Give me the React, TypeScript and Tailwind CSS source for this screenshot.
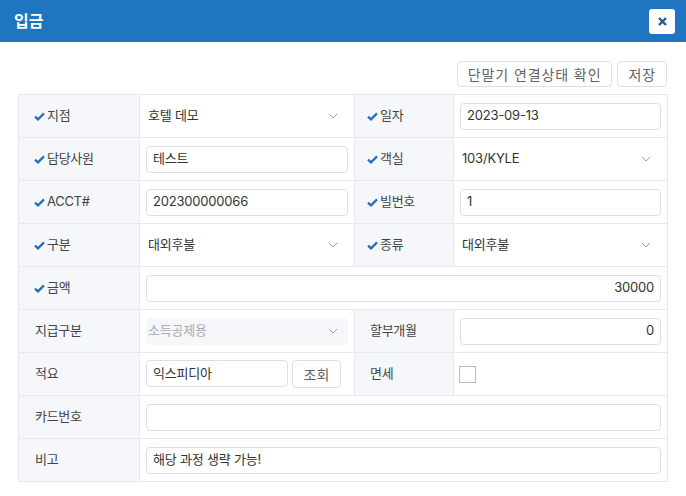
import React from "react";

const FONT = { fontFamily: 'Inter, "Noto Sans CJK KR", sans-serif' };

function Check() {
  return (
    <svg width="11" height="9" viewBox="0 0 11 9" className="mr-[2px] shrink-0">
      <path d="M1 4.6 L4 7.4 L10 1.4" fill="none" stroke="#2270b9" strokeWidth="2.2" />
    </svg>
  );
}

function Chevron() {
  return (
    <svg width="10" height="6" viewBox="0 0 10 6">
      <path d="M1 1 L5 5 L9 1" fill="none" stroke="#9aa0a8" strokeWidth="1" />
    </svg>
  );
}

function Label({ text, req, right }: { text: string; req?: boolean; right?: boolean }) {
  return (
    <div
      className={`flex items-center bg-[#f5f7fa] text-[13px] tracking-[-0.3px] text-[#444] ${
        right ? (req ? "pl-[12px]" : "pl-[15px]") : req ? "pl-[15px]" : "pl-4"
      }`}
    >
      {req && <Check />}
      {text}
    </div>
  );
}

function Input({ value, align }: { value: string; align?: "right" }) {
  return (
    <div
      className={`h-[27px] w-full rounded-[4px] border border-[#dcdfe6] bg-white px-[6px] flex items-center text-[13px] tracking-[-0.2px] text-[#333] ${
        align === "right" ? "justify-end" : ""
      }`}
    >
      {value}
    </div>
  );
}

function Select({ value, disabled }: { value: string; disabled?: boolean }) {
  return (
    <div
      className={`h-[27px] w-full rounded-[4px] flex items-center justify-between pl-[2px] pr-[10px] text-[13px] tracking-[-0.2px] ${
        disabled ? "bg-[#f5f7fa] text-[#a8abb2]" : "text-[#333]"
      }`}
    >
      <span>{value}</span>
      <Chevron />
    </div>
  );
}

function Value({ children, span }: { children: React.ReactNode; span?: boolean }) {
  return (
    <div className={`flex items-center bg-white px-[6px] ${span ? "col-span-3" : ""}`}>{children}</div>
  );
}

export default function App() {
  return (
    <div className="w-[686px] h-[496px] bg-white overflow-hidden" style={FONT}>
      <div className="h-[42px] bg-[#2075c0] flex items-center justify-between pl-[14px] pr-[11px]">
        <span className="text-white text-[16px] font-bold">입금</span>
        <div className="w-[26px] h-[25px] bg-white rounded-[3px] flex items-center justify-center">
          <svg width="11" height="11" viewBox="0 0 11 11">
            <path d="M2 2 L9 9 M9 2 L2 9" stroke="#1d5d9a" strokeWidth="2.4" />
          </svg>
        </div>
      </div>

      <div className="flex justify-end gap-[5px] pt-[19px] pr-[19px]">
        <button className="h-[26px] px-[10px] rounded-[4px] border border-[#dcdfe6] text-[14px] tracking-[0.9px] text-[#606266] bg-white">
          단말기 연결상태 확인
        </button>
        <button className="h-[26px] px-[10px] rounded-[4px] border border-[#dcdfe6] text-[14px] tracking-[0.9px] text-[#606266] bg-white">
          저장
        </button>
      </div>

      <div className="mx-[18px] mt-[7px] grid grid-cols-[120px_214px_98px_213px] auto-rows-[42px] gap-px bg-[#e6e8ec] border border-[#e6e8ec]">
        <Label text="지점" req />
        <Value>
          <Select value="호텔 데모" />
        </Value>
        <Label text="일자" req right />
        <Value>
          <Input value="2023-09-13" />
        </Value>

        <Label text="담당사원" req />
        <Value>
          <Input value="테스트" />
        </Value>
        <Label text="객실" req right />
        <Value>
          <Select value="103/KYLE" />
        </Value>

        <Label text="ACCT#" req />
        <Value>
          <Input value="202300000066" />
        </Value>
        <Label text="빌번호" req right />
        <Value>
          <Input value="1" />
        </Value>

        <Label text="구분" req />
        <Value>
          <Select value="대외후불" />
        </Value>
        <Label text="종류" req right />
        <Value>
          <Select value="대외후불" />
        </Value>

        <Label text="금액" req />
        <Value span>
          <Input value="30000" align="right" />
        </Value>

        <Label text="지급구분" />
        <Value>
          <Select value="소득공제용" disabled />
        </Value>
        <Label text="할부개월" right />
        <Value>
          <Input value="0" align="right" />
        </Value>

        <Label text="적요" />
        <Value>
          <div className="flex gap-[4px] w-full">
            <div className="w-[142px]">
              <Input value="익스피디아" />
            </div>
            <button className="h-[28px] w-[49px] rounded-[4px] border border-[#dcdfe6] text-[14px] text-[#606266] bg-white">
              조회
            </button>
          </div>
        </Value>
        <Label text="면세" right />
        <div className="flex items-center bg-white pl-[5px]">
          <div className="w-[17px] h-[17px] border border-[#bbbbbb] bg-white" />
        </div>

        <Label text="카드번호" />
        <Value span>
          <Input value="" />
        </Value>

        <Label text="비고" />
        <Value span>
          <Input value="해당 과정 생략 가능!" />
        </Value>
      </div>
    </div>
  );
}
